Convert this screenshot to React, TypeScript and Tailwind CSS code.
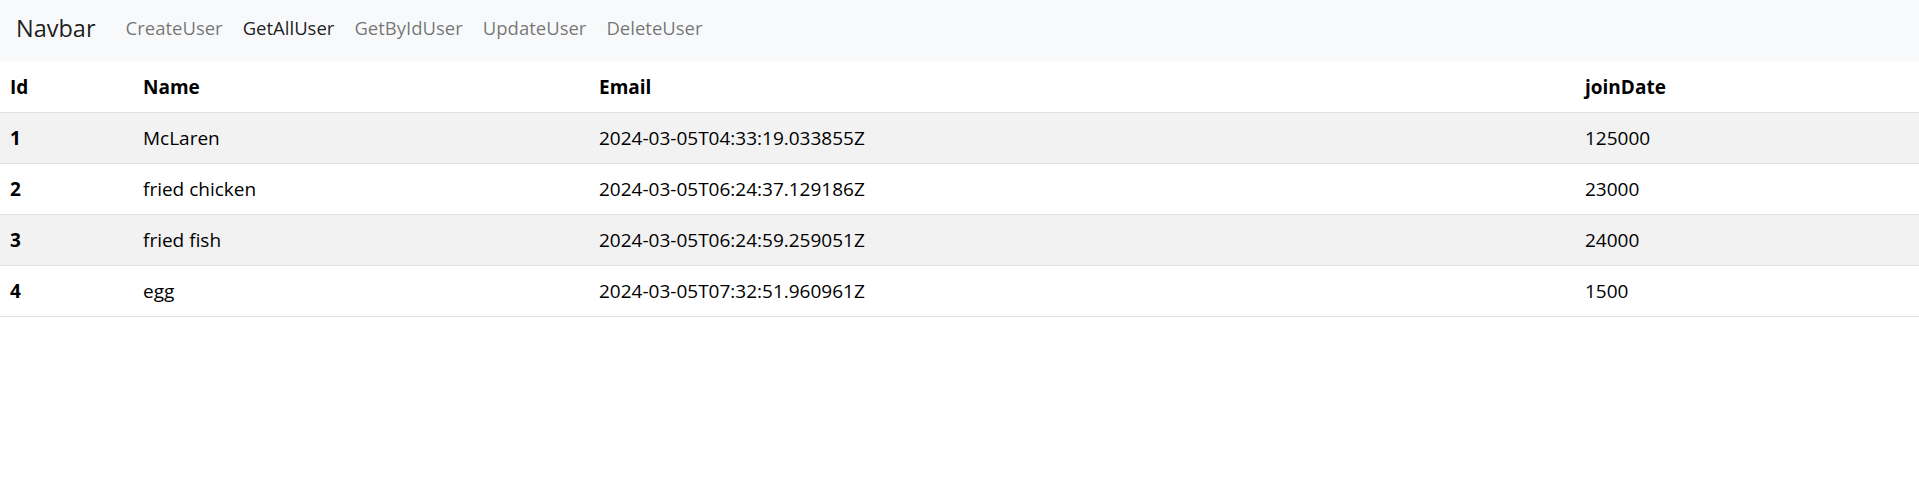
import React from 'react';

interface User {
  id: number;
  name: string;
  email: string;
  joinDate: string;
}

const users: User[] = [
  { id: 1, name: 'McLaren', email: '2024-03-05T04:33:19.033855Z', joinDate: '125000' },
  { id: 2, name: 'fried chicken', email: '2024-03-05T06:24:37.129186Z', joinDate: '23000' },
  { id: 3, name: 'fried fish', email: '2024-03-05T06:24:59.259051Z', joinDate: '24000' },
  { id: 4, name: 'egg', email: '2024-03-05T07:32:51.960961Z', joinDate: '1500' },
];

const links = ['CreateUser', 'GetAllUser', 'GetByIdUser', 'UpdateUser', 'DeleteUser'];

const App: React.FC = () => {
  return (
    <div className="min-h-screen bg-white text-[#212529] font-['Open_Sans',sans-serif]">
      <nav className="h-[62px] bg-[#f8f9fa] flex items-center px-4 pb-[5px]">
        <a href="#" className="text-[23.5px] text-black/90 mr-5 leading-none">
          Navbar
        </a>
        <ul className="flex items-center">
          {links.map((link) => (
            <li key={link}>
              <a
                href="#"
                className={`block px-[10px] text-[18.5px] leading-none ${
                  link === 'GetAllUser' ? 'text-black/90' : 'text-black/55'
                }`}
              >
                {link}
              </a>
            </li>
          ))}
        </ul>
      </nav>
      <table className="w-full table-fixed border-collapse text-[19px]">
        <colgroup>
          <col className="w-[133px]" />
          <col className="w-[456px]" />
          <col className="w-[986px]" />
          <col />
        </colgroup>
        <thead>
          <tr className="border-b border-[#dee2e6]">
            <th className="text-left font-bold text-black px-[10px] h-[50px] leading-[30px]">Id</th>
            <th className="text-left font-bold text-black px-[10px] h-[50px] leading-[30px]">Name</th>
            <th className="text-left font-bold text-black px-[10px] h-[50px] leading-[30px]">Email</th>
            <th className="text-left font-bold text-black px-[10px] h-[50px] leading-[30px]">joinDate</th>
          </tr>
        </thead>
        <tbody>
          {users.map((user, index) => (
            <tr
              key={user.id}
              className={`border-b border-[#dee2e6] ${index % 2 === 0 ? 'bg-[#f2f2f2]' : 'bg-white'}`}
            >
              <th className="text-left font-bold text-black px-[10px] h-[51px] leading-[30px]">{user.id}</th>
              <td className="px-[10px] h-[51px] leading-[30px] text-black">{user.name}</td>
              <td className="px-[10px] h-[51px] leading-[30px] text-black">{user.email}</td>
              <td className="px-[10px] h-[51px] leading-[30px] text-black">{user.joinDate}</td>
            </tr>
          ))}
        </tbody>
      </table>
    </div>
  );
};

export default App;
